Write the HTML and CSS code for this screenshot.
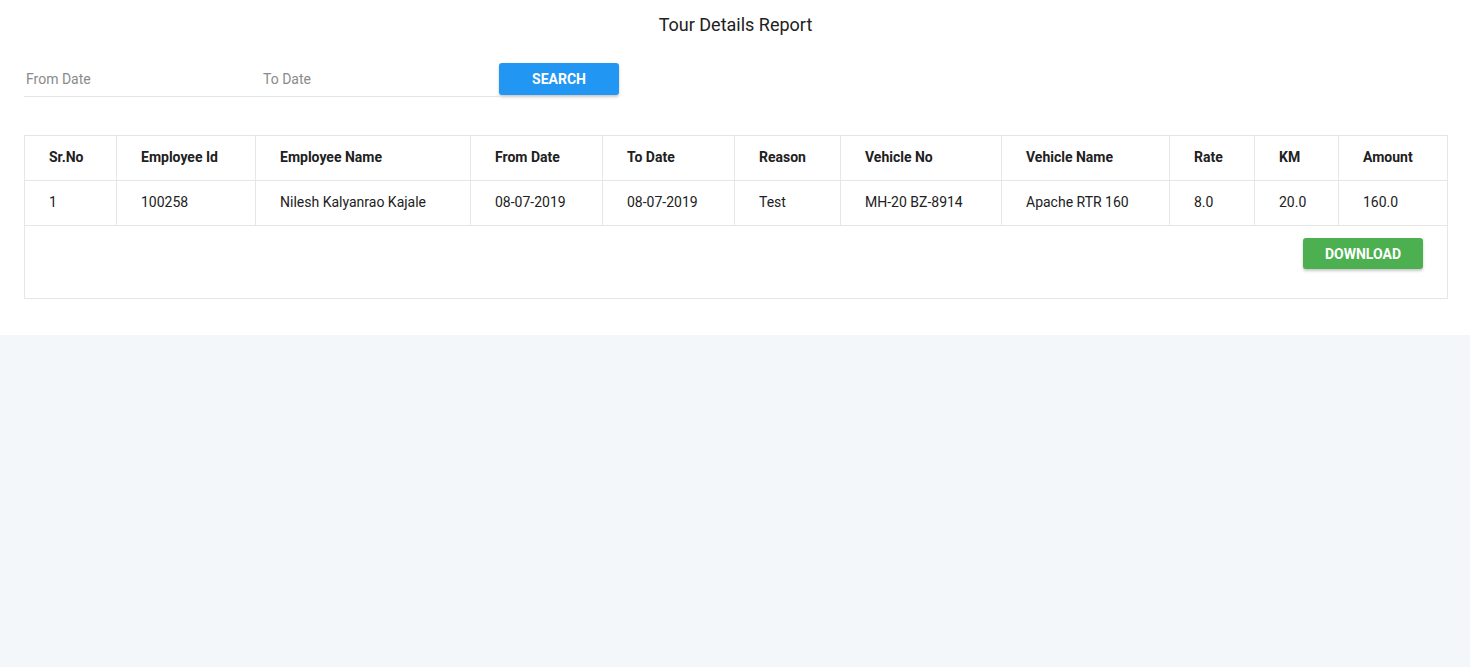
FILE: index.html
```html
<!DOCTYPE html>
<html>
<head>
<meta charset="utf-8">
<link rel="stylesheet" href="styles.css">
</head>
<body>
<div class="card">
  <h1 class="title">Tour Details Report</h1>
  <div class="filters">
    <input class="field" type="text" placeholder="From Date">
    <input class="field" type="text" placeholder="To Date">
    <button class="btn btn-blue">SEARCH</button>
  </div>
  <table class="report">
    <colgroup>
      <col style="width:92px"><col style="width:139px"><col style="width:215px"><col style="width:132px"><col style="width:132px"><col style="width:106px"><col style="width:161px"><col style="width:168px"><col style="width:85px"><col style="width:84px"><col style="width:109px">
    </colgroup>
    <thead>
      <tr>
        <th>Sr.No</th><th>Employee Id</th><th>Employee Name</th><th>From Date</th><th>To Date</th><th>Reason</th><th>Vehicle No</th><th>Vehicle Name</th><th>Rate</th><th>KM</th><th>Amount</th>
      </tr>
    </thead>
    <tbody>
      <tr>
        <td>1</td><td>100258</td><td>Nilesh Kalyanrao Kajale</td><td>08-07-2019</td><td>08-07-2019</td><td>Test</td><td>MH-20 BZ-8914</td><td>Apache RTR 160</td><td>8.0</td><td>20.0</td><td>160.0</td>
      </tr>
      <tr class="foot">
        <td colspan="11"><button class="btn btn-green">DOWNLOAD</button></td>
      </tr>
    </tbody>
  </table>
</div>
</body>
</html>
```
FILE: styles.css
```css
html, body {
  margin: 0;
  padding: 0;
  background: #f4f7fa;
  font-family: Roboto, "Liberation Sans", sans-serif;
  color: #212121;
}
.card {
  background: #fff;
  padding: 13px 23px 36px 24px;
  box-shadow: 0 2px 6px rgba(0,0,0,0.1);
}
.title {
  margin: 0;
  font-size: 18px;
  font-weight: 400;
  line-height: 24px;
  text-align: center;
  color: #212121;
}
.filters {
  display: flex;
  align-items: center;
  margin-top: 24px;
  height: 36px;
}
.field {
  width: 237px;
  height: 36px;
  box-sizing: border-box;
  border: 0;
  border-bottom: 1px solid #e6e6e6;
  padding: 0 2px;
  font-family: Roboto, "Liberation Sans", sans-serif;
  font-size: 14px;
  color: #333;
  outline: none;
  background: transparent;
}
.field::placeholder { color: #8a8a8a; }
.field + .field { width: 238px; }
.btn {
  border: 0;
  border-radius: 3px;
  color: #fff;
  font-family: Roboto, "Liberation Sans", sans-serif;
  font-size: 14px;
  font-weight: 700;
  height: 32px;
  width: 120px;
  box-shadow: 0 2px 3px rgba(0,0,0,0.22);
  cursor: pointer;
}
.btn-blue { background: #2196f3; }
.btn-green { background: #4caf50; height: 31px; }
.report {
  margin-top: 38px;
  width: 1424px;
  border-collapse: collapse;
  table-layout: fixed;
  font-size: 14px;
}
.report th, .report td {
  border: 1px solid #e6e6e6;
  height: 45px;
  padding: 0 0 3px 24px;
  box-sizing: border-box;
  text-align: left;
  color: #212121;
}
.report th { font-weight: 700; }
.report td { font-weight: 400; }
.report .foot td {
  height: 73px;
  text-align: right;
  vertical-align: top;
  padding: 12px 24px 0 0;
}
```
